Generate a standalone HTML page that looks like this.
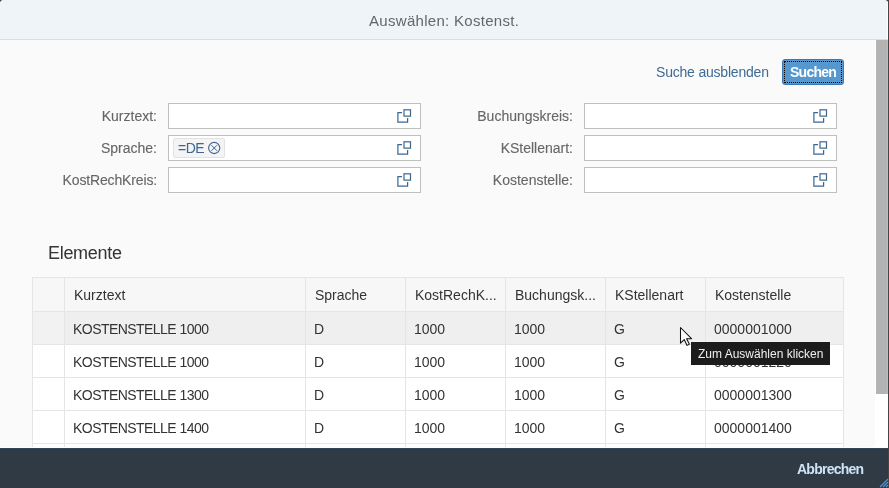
<!DOCTYPE html>
<html><head><meta charset="utf-8">
<style>
*{box-sizing:border-box;margin:0;padding:0}
html,body{width:889px;height:488px;overflow:hidden;background:#444546;font-family:"Liberation Sans",sans-serif}
.dlg{position:absolute;left:0;top:0;width:888px;height:488px;background:#fafafa;border-radius:4px 4px 0 0;overflow:hidden}
.t{position:absolute;white-space:nowrap;line-height:1}
body{-webkit-font-smoothing:antialiased}
.t,.lab,.ct{will-change:transform}
.lab{-webkit-text-stroke:0.12px}
.hdr{position:absolute;left:0;top:0;width:888px;height:40px;background:#eff4f9;border-bottom:1px solid #d3e0ec;border-right:1px solid #fbfdff}
.lab{position:absolute;font-size:14px;color:#666;text-align:right;line-height:14px;white-space:nowrap}
.inp{position:absolute;width:253px;height:26px;background:#fff;border:1px solid #bfbfbf}
.ico{position:absolute;left:228px;top:5px;width:16px;height:16px}
.tbl{position:absolute;left:32px;top:277px;width:812px;height:200px;border-left:1px solid #e5e5e5;border-top:1px solid #e5e5e5}
.row{position:absolute;left:0;width:811px;height:33px;border-bottom:1px solid #e5e5e5;background:#fff}
.c{position:absolute;top:0;height:100%;border-right:1px solid #e5e5e5}
.ct{position:absolute;font-size:14px;color:#333;line-height:14px;white-space:nowrap}
</style></head><body>
<div class="dlg">
  <div class="hdr"></div>
  <div class="t" style="left:369px;top:13px;font-size:15px;color:#666;letter-spacing:0.3px">Auswählen: Kostenst.</div>

  <div class="t" style="left:656px;top:65px;font-size:14px;color:#3f6b94;letter-spacing:-0.2px">Suche ausblenden</div>
  <div style="position:absolute;left:782px;top:59px;width:62px;height:26px;background:#5597cf;border:1px solid #3d7ab5;border-radius:3px"></div>
  <div style="position:absolute;left:784px;top:61px;width:58px;height:22px;border:1px dotted #000"></div>
  <div class="t" style="left:790px;top:65px;font-size:14px;font-weight:bold;color:#fff;letter-spacing:-0.75px;-webkit-text-stroke:0">Suchen</div>

  <div class="lab" style="left:0;width:157px;top:109px">Kurztext:</div>
  <div class="lab" style="left:0;width:157px;top:141px">Sprache:</div>
  <div class="lab" style="left:0;width:157px;top:173px;letter-spacing:-0.15px">KostRechKreis:</div>
  <div class="lab" style="left:0;width:573px;top:109px">Buchungskreis:</div>
  <div class="lab" style="left:0;width:573px;top:141px">KStellenart:</div>
  <div class="lab" style="left:0;width:573px;top:173px">Kostenstelle:</div>

  <div class="inp" style="left:168px;top:103px"><svg class="ico" viewBox="0 0 16 16"><path d="M5 3.6H0.9V13.1H10.6V9.1" fill="none" stroke="#3a6690" stroke-width="1.2"/><rect x="7" y="0.8" width="6.5" height="6.3" fill="none" stroke="#3a6690" stroke-width="1.2"/></svg></div>
  <div class="inp" style="left:168px;top:135px"><svg class="ico" viewBox="0 0 16 16"><path d="M5 3.6H0.9V13.1H10.6V9.1" fill="none" stroke="#3a6690" stroke-width="1.2"/><rect x="7" y="0.8" width="6.5" height="6.3" fill="none" stroke="#3a6690" stroke-width="1.2"/></svg></div>
  <div class="inp" style="left:168px;top:167px"><svg class="ico" viewBox="0 0 16 16"><path d="M5 3.6H0.9V13.1H10.6V9.1" fill="none" stroke="#3a6690" stroke-width="1.2"/><rect x="7" y="0.8" width="6.5" height="6.3" fill="none" stroke="#3a6690" stroke-width="1.2"/></svg></div>
  <div class="inp" style="left:584px;top:103px"><svg class="ico" viewBox="0 0 16 16"><path d="M5 3.6H0.9V13.1H10.6V9.1" fill="none" stroke="#3a6690" stroke-width="1.2"/><rect x="7" y="0.8" width="6.5" height="6.3" fill="none" stroke="#3a6690" stroke-width="1.2"/></svg></div>
  <div class="inp" style="left:584px;top:135px"><svg class="ico" viewBox="0 0 16 16"><path d="M5 3.6H0.9V13.1H10.6V9.1" fill="none" stroke="#3a6690" stroke-width="1.2"/><rect x="7" y="0.8" width="6.5" height="6.3" fill="none" stroke="#3a6690" stroke-width="1.2"/></svg></div>
  <div class="inp" style="left:584px;top:167px"><svg class="ico" viewBox="0 0 16 16"><path d="M5 3.6H0.9V13.1H10.6V9.1" fill="none" stroke="#3a6690" stroke-width="1.2"/><rect x="7" y="0.8" width="6.5" height="6.3" fill="none" stroke="#3a6690" stroke-width="1.2"/></svg></div>

  <div style="position:absolute;left:173px;top:138px;width:52px;height:20px;background:#f4f4f4;border:1px solid #e2e2e2;border-radius:2px"></div>
  <div class="t" style="left:178px;top:141px;font-size:14px;color:#3a6690;letter-spacing:-0.5px">=DE</div>
  <svg style="position:absolute;left:207px;top:141px" width="14" height="14" viewBox="0 0 14 14"><circle cx="7.2" cy="7" r="5.6" fill="none" stroke="#3a6690" stroke-width="1.1"/><path d="M4.4 4.2L10 9.8M10 4.2L4.4 9.8" stroke="#3a6690" stroke-width="1"/></svg>

  <div class="t" style="left:48px;top:244px;font-size:18px;color:#333;letter-spacing:-0.3px">Elemente</div>

  <div class="tbl">
    <div class="row" style="top:0;height:34px;background:#f7f7f7">
      <div class="c" style="left:0;width:32px"></div>
      <div class="c" style="left:32px;width:241px"></div>
      <div class="c" style="left:273px;width:100px"></div>
      <div class="c" style="left:373px;width:100px"></div>
      <div class="c" style="left:473px;width:100px"></div>
      <div class="c" style="left:573px;width:100px"></div>
      <div class="c" style="left:673px;width:138px"></div>
      <div class="ct" style="left:41px;top:10px;color:#333">Kurztext</div>
      <div class="ct" style="left:282px;top:10px;color:#333">Sprache</div>
      <div class="ct" style="left:382px;top:10px;color:#333">KostRechK...</div>
      <div class="ct" style="left:482px;top:10px;color:#333">Buchungsk...</div>
      <div class="ct" style="left:582px;top:10px;color:#333">KStellenart</div>
      <div class="ct" style="left:682px;top:10px;color:#333">Kostenstelle</div>
    </div>
    <div class="row" style="top:34px;background:#efefef">
      <div class="c" style="left:0;width:32px;background:#f2f2f2"></div>
      <div class="c" style="left:32px;width:241px"></div>
      <div class="c" style="left:273px;width:100px"></div>
      <div class="c" style="left:373px;width:100px"></div>
      <div class="c" style="left:473px;width:100px"></div>
      <div class="c" style="left:573px;width:100px"></div>
      <div class="c" style="left:673px;width:138px"></div>
      <div class="ct" style="left:40px;top:10px;letter-spacing:-0.55px">KOSTENSTELLE 1000</div>
      <div class="ct" style="left:281px;top:10px">D</div>
      <div class="ct" style="left:381px;top:10px">1000</div>
      <div class="ct" style="left:481px;top:10px">1000</div>
      <div class="ct" style="left:581px;top:10px">G</div>
      <div class="ct" style="left:681px;top:10px">0000001000</div>
    </div>
    <div class="row" style="top:67px;background:#fff">
      <div class="c" style="left:0;width:32px"></div>
      <div class="c" style="left:32px;width:241px"></div>
      <div class="c" style="left:273px;width:100px"></div>
      <div class="c" style="left:373px;width:100px"></div>
      <div class="c" style="left:473px;width:100px"></div>
      <div class="c" style="left:573px;width:100px"></div>
      <div class="c" style="left:673px;width:138px"></div>
      <div class="ct" style="left:40px;top:10px;letter-spacing:-0.55px">KOSTENSTELLE 1000</div>
      <div class="ct" style="left:281px;top:10px">D</div>
      <div class="ct" style="left:381px;top:10px">1000</div>
      <div class="ct" style="left:481px;top:10px">1000</div>
      <div class="ct" style="left:581px;top:10px">G</div>
      <div class="ct" style="left:681px;top:10px">0000001220</div>
    </div>
    <div class="row" style="top:100px;background:#fff">
      <div class="c" style="left:0;width:32px"></div>
      <div class="c" style="left:32px;width:241px"></div>
      <div class="c" style="left:273px;width:100px"></div>
      <div class="c" style="left:373px;width:100px"></div>
      <div class="c" style="left:473px;width:100px"></div>
      <div class="c" style="left:573px;width:100px"></div>
      <div class="c" style="left:673px;width:138px"></div>
      <div class="ct" style="left:40px;top:10px;letter-spacing:-0.55px">KOSTENSTELLE 1300</div>
      <div class="ct" style="left:281px;top:10px">D</div>
      <div class="ct" style="left:381px;top:10px">1000</div>
      <div class="ct" style="left:481px;top:10px">1000</div>
      <div class="ct" style="left:581px;top:10px">G</div>
      <div class="ct" style="left:681px;top:10px">0000001300</div>
    </div>
    <div class="row" style="top:133px;background:#fff">
      <div class="c" style="left:0;width:32px"></div>
      <div class="c" style="left:32px;width:241px"></div>
      <div class="c" style="left:273px;width:100px"></div>
      <div class="c" style="left:373px;width:100px"></div>
      <div class="c" style="left:473px;width:100px"></div>
      <div class="c" style="left:573px;width:100px"></div>
      <div class="c" style="left:673px;width:138px"></div>
      <div class="ct" style="left:40px;top:10px;letter-spacing:-0.55px">KOSTENSTELLE 1400</div>
      <div class="ct" style="left:281px;top:10px">D</div>
      <div class="ct" style="left:381px;top:10px">1000</div>
      <div class="ct" style="left:481px;top:10px">1000</div>
      <div class="ct" style="left:581px;top:10px">G</div>
      <div class="ct" style="left:681px;top:10px">0000001400</div>
    </div>
    <div class="row" style="top:166px;background:#fff">
      <div class="c" style="left:0;width:32px"></div>
      <div class="c" style="left:32px;width:241px"></div>
      <div class="c" style="left:273px;width:100px"></div>
      <div class="c" style="left:373px;width:100px"></div>
      <div class="c" style="left:473px;width:100px"></div>
      <div class="c" style="left:573px;width:100px"></div>
      <div class="c" style="left:673px;width:138px"></div>
      <div class="ct" style="left:40px;top:10px;letter-spacing:-0.55px">KOSTENSTELLE 1500</div>
      <div class="ct" style="left:281px;top:10px">D</div>
      <div class="ct" style="left:381px;top:10px">1000</div>
      <div class="ct" style="left:481px;top:10px">1000</div>
      <div class="ct" style="left:581px;top:10px">G</div>
      <div class="ct" style="left:681px;top:10px">0000001500</div>
    </div>
  </div>

  <div style="position:absolute;left:875px;top:40px;width:13px;height:408px;background:#fff"></div>
  <div style="position:absolute;left:876px;top:40px;width:12px;height:354px;background:#b3b3b3;border-right:1px solid #bdbdbd"></div>
  <div style="position:absolute;left:0;top:447px;width:876px;height:1px;background:#fff"></div>
  <div style="position:absolute;left:691px;top:342px;width:139px;height:23px;background:#1c1c1c"></div>
  <div class="t" style="left:698px;top:348px;font-size:12px;color:#f0f0f0">Zum Auswählen klicken</div>
  <svg style="position:absolute;left:679px;top:326px" width="14" height="21" viewBox="0 0 14 21"><path d="M1.5 1.5V17.2L5.2 13.6L8.1 19.4L10.4 18.3L7.6 12.7H12.5Z" fill="#fff" stroke="#111" stroke-width="1.05" stroke-linejoin="round"/></svg>
  <div style="position:absolute;left:0;top:448px;width:888px;height:40px;background:#2f3a45;border-top:1px solid #304456"></div>
  <div class="t" style="left:797px;top:462px;font-size:14px;font-weight:bold;color:#cfe3f7;letter-spacing:-0.75px;-webkit-text-stroke:0">Abbrechen</div>
</div>
<div style="position:absolute;left:1px;top:1px;width:1px;height:1px;background:#fff"></div>
<svg style="position:absolute;left:877px;top:476px" width="12" height="12" viewBox="0 0 12 12"><path d="M3 11L11 3M6 11L11 6M9 11L11 9" stroke="#4f95d8" stroke-width="1.1"/></svg>
</body></html>
